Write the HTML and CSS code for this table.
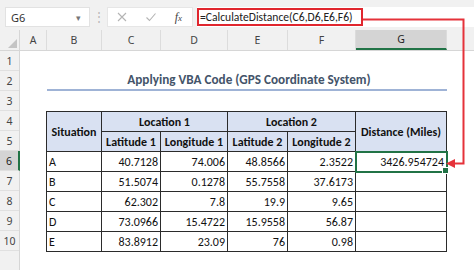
FILE: index.html
```html
<!DOCTYPE html>
<html>
<head>
<meta charset="utf-8">
<link rel="stylesheet" href="styles.css">
</head>
<body>
<div class="page">
  <div class="toolbar">
    <div class="namebox"><span class="nb-text">G6</span><span class="caret">&#9662;</span></div>
    <div class="dots">&#8942;</div>
    <div class="fxbox">
      <svg class="ic" width="12" height="12" viewBox="0 0 12 12"><path d="M2 2L10 10M10 2L2 10" stroke="#b4b4b4" stroke-width="1.1" fill="none"/></svg>
      <svg class="ic" width="12" height="12" viewBox="0 0 12 12"><path d="M1.5 6.5L4.5 9.5L10.5 2.5" stroke="#b4b4b4" stroke-width="1.1" fill="none"/></svg>
      <span class="fx"><i>f</i><i class="sx">x</i></span>
    </div>
    <div class="formula"><span class="ftext">=CalculateDistance(C6,D6,E6,F6)</span></div>
  </div>
  <div class="sheet">
    <div class="corner"><span class="tri"></span></div>
    <div class="colheads">
      <div class="ch w-a">A</div>
      <div class="ch w-b">B</div>
      <div class="ch w-c">C</div>
      <div class="ch w-d">D</div>
      <div class="ch w-e">E</div>
      <div class="ch w-f">F</div>
      <div class="ch w-g sel">G</div>
      <div class="ch w-h"></div>
    </div>
    <div class="rowheads">
      <div class="rh">1</div>
      <div class="rh">2</div>
      <div class="rh">3</div>
      <div class="rh">4</div>
      <div class="rh">5</div>
      <div class="rh sel">6</div>
      <div class="rh">7</div>
      <div class="rh">8</div>
      <div class="rh">9</div>
      <div class="rh">10</div>
      <div class="rh"></div>
    </div>
    <div class="cells">
      <div class="title">Applying VBA Code (GPS Coordinate System)</div>
      <table class="data">
        <colgroup>
          <col class="cb"><col class="cc"><col class="cd"><col class="ce"><col class="cf"><col class="cg">
        </colgroup>
        <tr>
          <th rowspan="2">Situation</th>
          <th colspan="2">Location 1</th>
          <th colspan="2">Location 2</th>
          <th rowspan="2">Distance (Miles)</th>
        </tr>
        <tr>
          <th>Latitude 1</th><th>Longitude 1</th><th>Latitude 2</th><th>Longitude 2</th>
        </tr>
        <tr><td class="l">A</td><td>40.7128</td><td>74.006</td><td>48.8566</td><td>2.3522</td><td class="active">3426.954724</td></tr>
        <tr><td class="l">B</td><td>51.5074</td><td>0.1278</td><td>55.7558</td><td>37.6173</td><td></td></tr>
        <tr><td class="l">C</td><td>62.302</td><td>7.8</td><td>19.9</td><td>9.65</td><td></td></tr>
        <tr><td class="l">D</td><td>73.0966</td><td>15.4722</td><td>15.9558</td><td>56.87</td><td></td></tr>
        <tr><td class="l">E</td><td>83.8912</td><td>23.09</td><td>76</td><td>0.98</td><td></td></tr>
      </table>
    </div>
  </div>
  <svg class="arrow" width="474" height="270" viewBox="0 0 474 270">
    <path d="M363 19.5H463.5V163.5H452" stroke="#e5323a" stroke-width="2" fill="none"/>
    <polygon points="446,163.5 455,159 455,168" fill="#e5323a"/>
  </svg>
</div>
</body>
</html>
```
FILE: styles.css
```css
* { box-sizing: border-box; }
html, body { margin: 0; padding: 0; }
body {
  width: 474px;
  height: 270px;
  overflow: hidden;
  background: #ffffff;
  font-family: Carlito, Calibri, Lato, "Liberation Sans", sans-serif;
}
.page { position: relative; width: 474px; height: 270px; }

.toolbar {
  height: 30px;
  background: #f1f1f1;
  display: flex;
  align-items: flex-start;
  padding: 7px 0 0 5px;
}
.namebox {
  width: 85px;
  height: 20px;
  background: #fff;
  border: 1px solid #e2e2e2;
  display: flex;
  align-items: center;
  justify-content: space-between;
  padding: 0 8px 0 5px;
  font-family: "Noto Sans", "Open Sans", sans-serif;
  font-size: 11px;
  color: #333;
}
.caret { font-size: 9px; color: #777; }
.dots {
  width: 17px;
  height: 20px;
  display: flex;
  align-items: center;
  justify-content: center;
  color: #b8b8b8;
  font-size: 12px;
}
.fxbox {
  width: 86px;
  height: 20px;
  background: #fff;
  border: 1px solid #e6e6e6;
  display: flex;
  align-items: center;
  justify-content: space-between;
  padding: 0 10px 0 8px;
}
.ic { display: block; }
.fx {
  font-family: "Liberation Serif", "DejaVu Serif", serif;
  font-size: 12px;
  color: #444;
}
.fx .sx { font-size: 9px; }
.formula {
  flex: 1;
  height: 20px;
  margin-left: 4px;
  background: #fff;
  display: flex;
  align-items: center;
}
.ftext {
  height: 18px;
  width: 166px;
  border: 2px solid #e0262e;
  display: flex;
  align-items: center;
  padding-left: 1px;
  font-family: Carlito, Calibri, Lato, sans-serif;
  font-size: 11.6px;
  color: #222;
  white-space: nowrap;
  overflow: hidden;
}

.sheet {
  display: grid;
  grid-template-columns: 20px 1fr;
  grid-template-rows: 21px 1fr;
  height: 240px;
}
.corner {
  background: #f1f1f1;
  border-right: 1px solid #d6d6d6;
  border-bottom: 1px solid #d6d6d6;
  position: relative;
}
.tri {
  position: absolute;
  right: 2px;
  bottom: 2px;
  width: 0; height: 0;
  border-left: 9px solid transparent;
  border-bottom: 9px solid #c4c4c4;
}
.colheads {
  display: flex;
  background: #f1f1f1;
  border-bottom: 1px solid #d6d6d6;
}
.ch {
  height: 20px;
  border-right: 1px solid #dcdcdc;
  display: flex;
  align-items: center;
  justify-content: center;
  font-family: "Noto Sans", "Open Sans", sans-serif;
  font-size: 10.5px;
  color: #444;
}
.ch.sel {
  background: #d4d4d4;
  border-bottom: 2px solid #217346;
  color: #222;
}
.w-a { width: 27px; }
.w-b { width: 55px; }
.w-c { width: 59px; }
.w-d { width: 67px; }
.w-e { width: 60px; }
.w-f { width: 68px; }
.w-g { width: 91px; }
.w-h { flex: 1; border-right: none; }

.rowheads {
  display: flex;
  flex-direction: column;
  background: #f1f1f1;
  border-right: 1px solid #d6d6d6;
}
.rh {
  height: 20px;
  flex: none;
  border-bottom: 1px solid #e0e0e0;
  display: flex;
  align-items: center;
  justify-content: center;
  font-family: "Noto Sans", "Open Sans", sans-serif;
  font-size: 10.5px;
  color: #444;
}
.rh.sel {
  background: #d4d4d4;
  border-right: 2px solid #217346;
  margin-right: -1px;
  color: #222;
}

.cells {
  display: grid;
  grid-template-columns: 27px 55px 59px 67px 60px 68px 91px 1fr;
  grid-template-rows: repeat(11, 20px);
}
.title {
  grid-column: 2 / 8;
  grid-row: 2 / 3;
  border-bottom: 2px solid #9fb3d6;
  text-align: center;
  font-weight: bold;
  font-size: 13.2px;
  color: #44546a;
  line-height: 18px;
  padding-left: 4px;
}
.data {
  grid-column: 2 / 8;
  grid-row: 4 / 11;
  margin-top: 0;
  width: 401px;
  margin-left: -1px;
  border-collapse: collapse;
  table-layout: fixed;
  font-size: 12px;
  color: #111;
}
.cb { width: 55px; }
.cc { width: 59px; }
.cd { width: 67px; }
.ce { width: 60px; }
.cf { width: 68px; }
.cg { width: 91px; }
.data th, .data td {
  border: 1px solid #2b2b2b;
  height: 20px;
  padding: 0 2px;
  white-space: nowrap;
  overflow: hidden;
  line-height: 18px;
}
.data th {
  background: #d9e1f2;
  font-weight: bold;
  text-align: center;
}
.data td { text-align: right; }
.data td.l { text-align: left; }
.data td.active {
  position: relative;
  outline: 2px solid #217346;
  outline-offset: -1px;
  overflow: visible;
}
.data td.active::after {
  content: "";
  position: absolute;
  right: -3px;
  bottom: -3px;
  width: 5px;
  height: 5px;
  background: #217346;
  border: 1px solid #fff;
}

.arrow {
  position: absolute;
  left: 0;
  top: 0;
  pointer-events: none;
}
```
